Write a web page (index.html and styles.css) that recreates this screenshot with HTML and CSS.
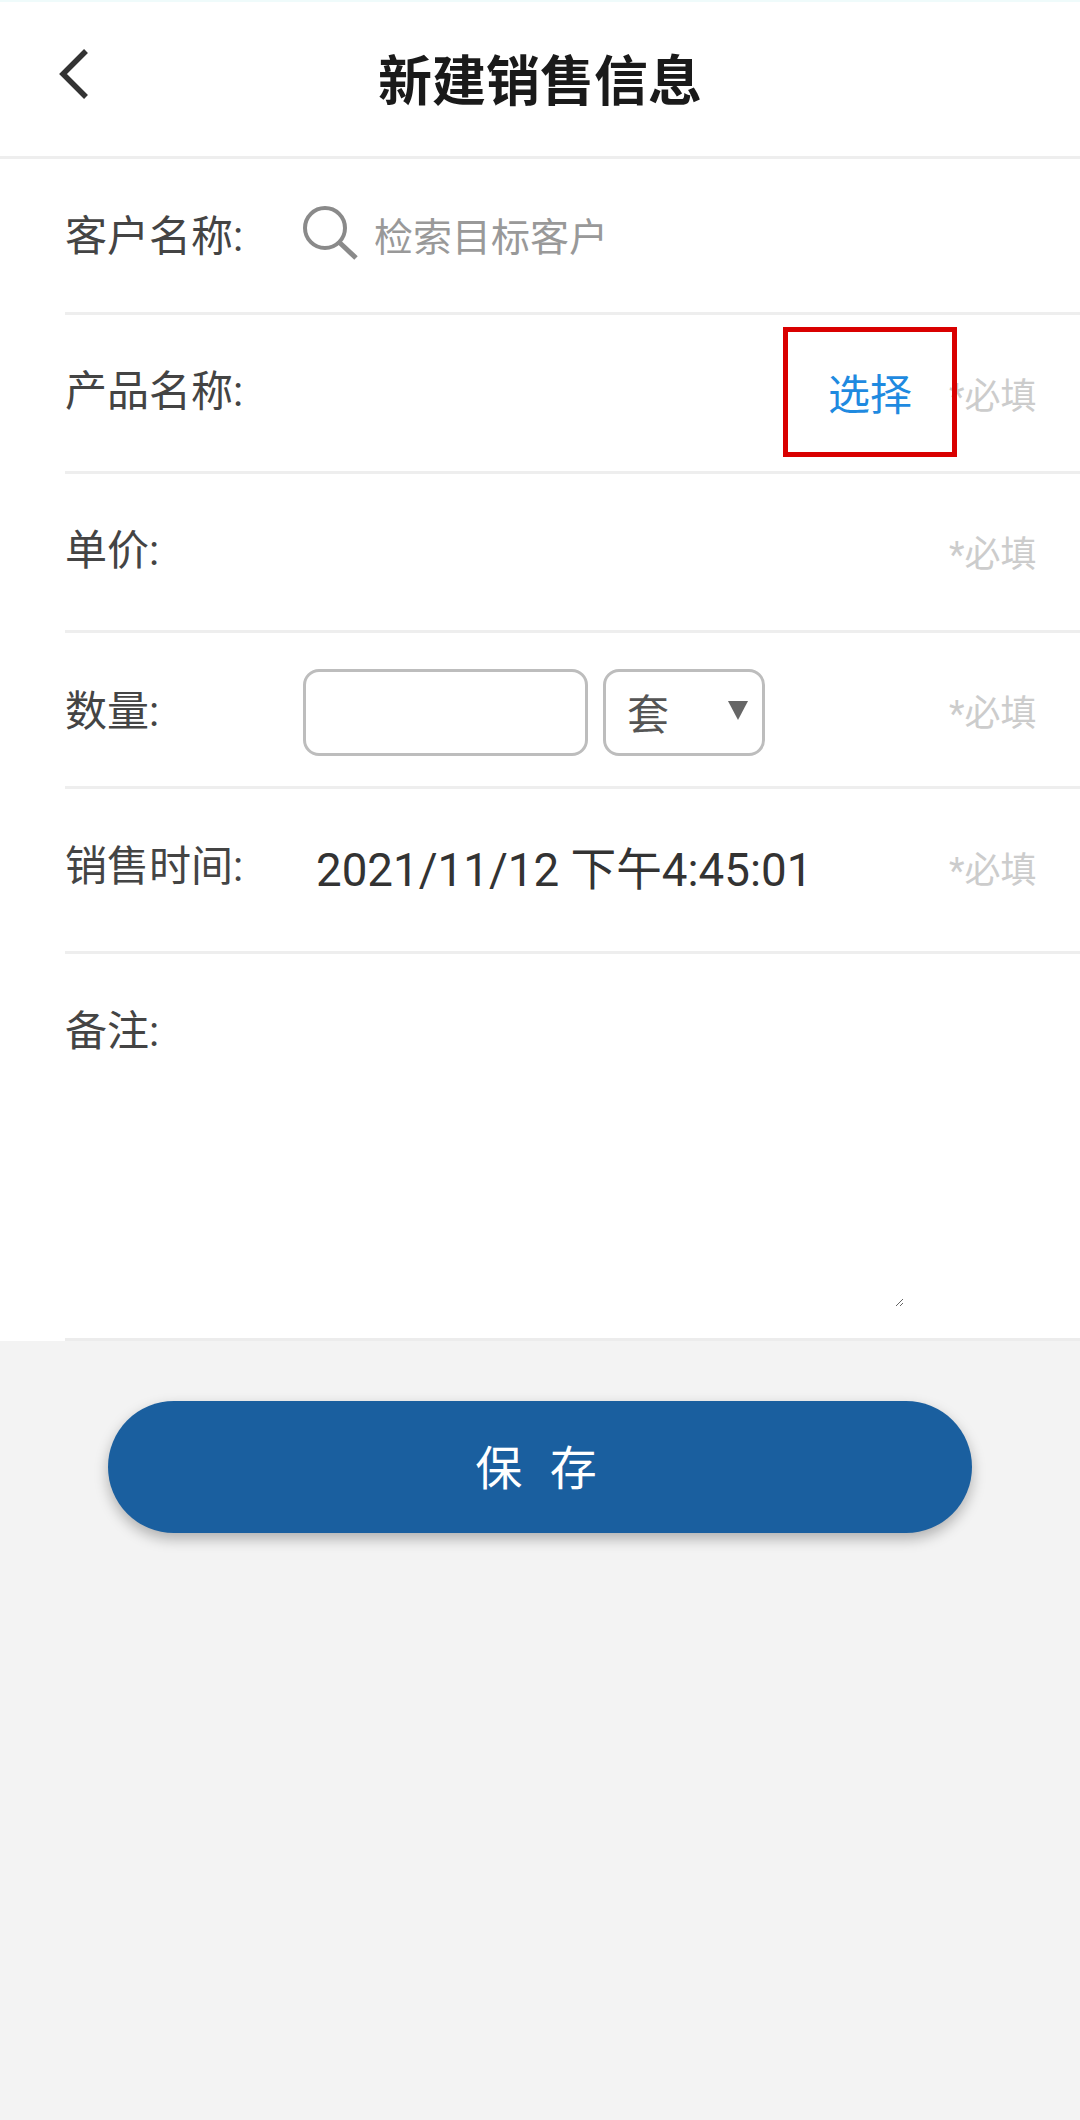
FILE: index.html
```html
<!DOCTYPE html>
<html lang="zh-CN">
<head>
<meta charset="utf-8">
<title>新建销售信息</title>
<link rel="stylesheet" href="styles.css">
</head>
<body>
<header class="topbar">
  <svg class="back" width="30" height="52" viewBox="0 0 30 52"><path d="M27 3 L4 26 L27 49" fill="none" stroke="#333" stroke-width="5.5"/></svg>
  <h1 class="title">新建销售信息</h1>
</header>
<main class="form">
  <div class="row row-customer">
    <span class="label">客户名称:</span>
    <svg class="search" width="56" height="54" viewBox="0 0 56 54"><circle cx="22" cy="22" r="20" fill="none" stroke="#8a8a8a" stroke-width="4"/><path d="M37 37 L53 52" fill="none" stroke="#8a8a8a" stroke-width="5"/></svg>
    <input class="search-input" type="text" placeholder="检索目标客户">
  </div>
  <div class="row row-product">
    <span class="label">产品名称:</span>
    <span class="pick">选择</span>
    <span class="req">*必填</span>
    <span class="mark"></span>
  </div>
  <div class="row row-price">
    <span class="label">单价:</span>
    <span class="req">*必填</span>
  </div>
  <div class="row row-qty">
    <span class="label">数量:</span>
    <input class="qty" type="text">
    <div class="unit"><span>套</span><i class="arrow"></i></div>
    <span class="req">*必填</span>
  </div>
  <div class="row row-time">
    <span class="label">销售时间:</span>
    <span class="date">2021/11/12 下午4:45:01</span>
    <span class="req">*必填</span>
  </div>
  <div class="row row-note">
    <span class="label">备注:</span>
    <textarea class="note"></textarea>
  </div>
</main>
<div class="actions">
  <button class="save" type="button">保 存</button>
</div>
</body>
</html>
```
FILE: styles.css
```css
* { box-sizing: border-box; }
html, body { margin: 0; padding: 0; }
body {
  width: 1080px;
  height: 2120px;
  background: #f3f3f3;
  font-family: Roboto, "Noto Sans CJK SC", sans-serif;
  overflow: hidden;
}
.topbar {
  height: 159px;
  background: #fff;
  border-top: 2px solid #effbfb;
  border-bottom: 3px solid #eeeeee;
  display: flex;
  align-items: flex-start;
  position: relative;
  justify-content: center;
}
.back { position: absolute; left: 59px; top: 46px; }
.title {
  margin: 0;
  padding-top: 49px;
  font-size: 54px;
  line-height: 64px;
  font-weight: 700;
  color: #1a1a1a;
}
.form {
  background: #fff;
  padding-left: 65px;
}
.row {
  display: flex;
  align-items: center;
  position: relative;
  border-bottom: 3px solid #eeeeee;
}
.row-customer { height: 156px; }
.row-product { height: 159px; }
.row-price { height: 159px; }
.row-qty { height: 156px; }
.row-time { height: 165px; }
.row-note { height: 387px; align-items: flex-start; border-bottom-color: #ececec; }
.label {
  width: 238px;
  flex: none;
  font-size: 42px;
  line-height: 50px;
  color: #444;
}
.row-customer .label { margin-top: 2px; }
.row-product .label { margin-top: -2px; }
.row-price .label { margin-top: -2px; }
.row-qty .label { margin-top: 4px; }
.row-time .label { margin-top: -7px; }
.row-note .label { margin-top: 53px; }
.search { flex: none; margin-top: -6px; }
.search-input {
  border: 0;
  outline: 0;
  padding: 0;
  margin-left: 15px;
  margin-top: 4px;
  width: 400px;
  font: inherit;
  font-size: 39px;
  color: #999;
}
.search-input::placeholder { color: #999; opacity: 1; }
.pick {
  margin-left: auto;
  margin-right: 37px;
  margin-top: 6px;
  font-size: 42px;
  line-height: 50px;
  color: #1f8ae0;
}
.req {
  margin-left: auto;
  flex: none;
  width: 87px;
  margin-right: 44px;
  font-size: 36px;
  line-height: 44px;
  color: #cccccc;
  white-space: nowrap;
}
.row-product .req { margin-top: 8px; }
.row-price .req { margin-top: 6px; }
.row-qty .req { margin-top: 9px; }
.row-time .req { margin-top: 2px; }
.pick + .req { margin-left: 0; }
.mark {
  position: absolute;
  left: 718px;
  top: 12px;
  width: 174px;
  height: 130px;
  border: 5px solid #d90000;
}
.qty {
  width: 285px;
  height: 87px;
  margin-top: 6px;
  border: 3px solid #bdbdbd;
  border-radius: 16px;
  background: #fff;
  outline: 0;
  flex: none;
}
.unit {
  position: relative;
  width: 162px;
  height: 87px;
  margin-top: 6px;
  margin-left: 15px;
  padding-left: 21px;
  padding-bottom: 3px;
  flex: none;
  border: 3px solid #bdbdbd;
  border-radius: 16px;
  display: flex;
  align-items: center;
  font-size: 42px;
  color: #555;
}
.arrow {
  position: absolute;
  right: 14px;
  top: 29px;
  width: 0;
  height: 0;
  border-left: 10px solid transparent;
  border-right: 10px solid transparent;
  border-top: 19px solid #666;
}
.date {
  margin-left: 13px;
  margin-top: 2px;
  font-size: 45.7px;
  line-height: 52px;
  color: #333;
}
.note {
  width: 601px;
  height: 353px;
  border: 0;
  outline: 0;
  padding: 0;
  background: #fff;
  flex: none;
}
.actions {
  padding: 60px 108px 0;
}
.save {
  display: block;
  width: 100%;
  height: 132px;
  padding: 0 0 5px;
  border: 0;
  border-radius: 66px;
  background: #1a5f9f;
  color: #fff;
  font-family: inherit;
  font-size: 47px;
  letter-spacing: 8px;
  box-shadow: 0 6px 14px rgba(0, 0, 0, 0.28);
}
```
